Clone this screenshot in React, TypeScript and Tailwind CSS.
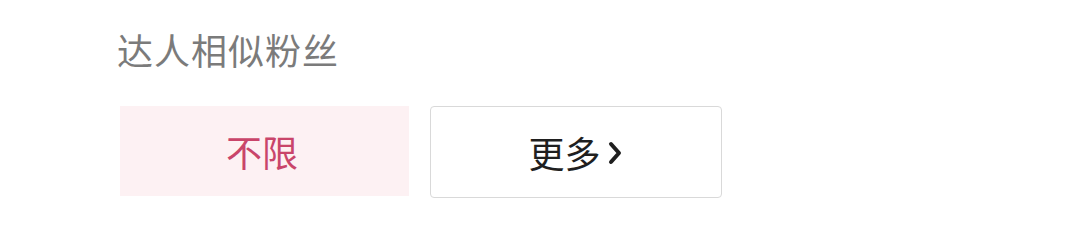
import React from "react";

export default function App() {
  return (
    <div
      className="w-[1080px] h-[252px] bg-white overflow-hidden"
      style={{ fontFamily: '"Noto Sans CJK SC", "Noto Sans", sans-serif' }}
    >
      <div className="pl-[117px] pt-[29px] text-[36px] leading-[40px] text-[#7b7b7b] tracking-[1px]">
        达人相似粉丝
      </div>
      <div className="flex gap-[21px] pl-[120px] mt-[37px]">
        <div className="w-[289px] h-[90px] bg-[#fdf1f3] flex items-center justify-center text-[36px] text-[#c9456a] pr-[5px]">
          不限
        </div>
        <div className="w-[292px] h-[92px] border border-[#d9d9d9] rounded-[4px] bg-white flex items-center justify-center text-[36px] text-[#1f1f1f]">
          <span>更多</span>
          <svg
            width="18"
            height="26"
            viewBox="0 0 18 26"
            className="ml-[5px] mt-[2px]"
          >
            <path
              d="M5 4 L13 13 L5 22"
              fill="none"
              stroke="#1f1f1f"
              strokeWidth="4"
              strokeLinecap="round"
              strokeLinejoin="round"
            />
          </svg>
        </div>
      </div>
    </div>
  );
}
